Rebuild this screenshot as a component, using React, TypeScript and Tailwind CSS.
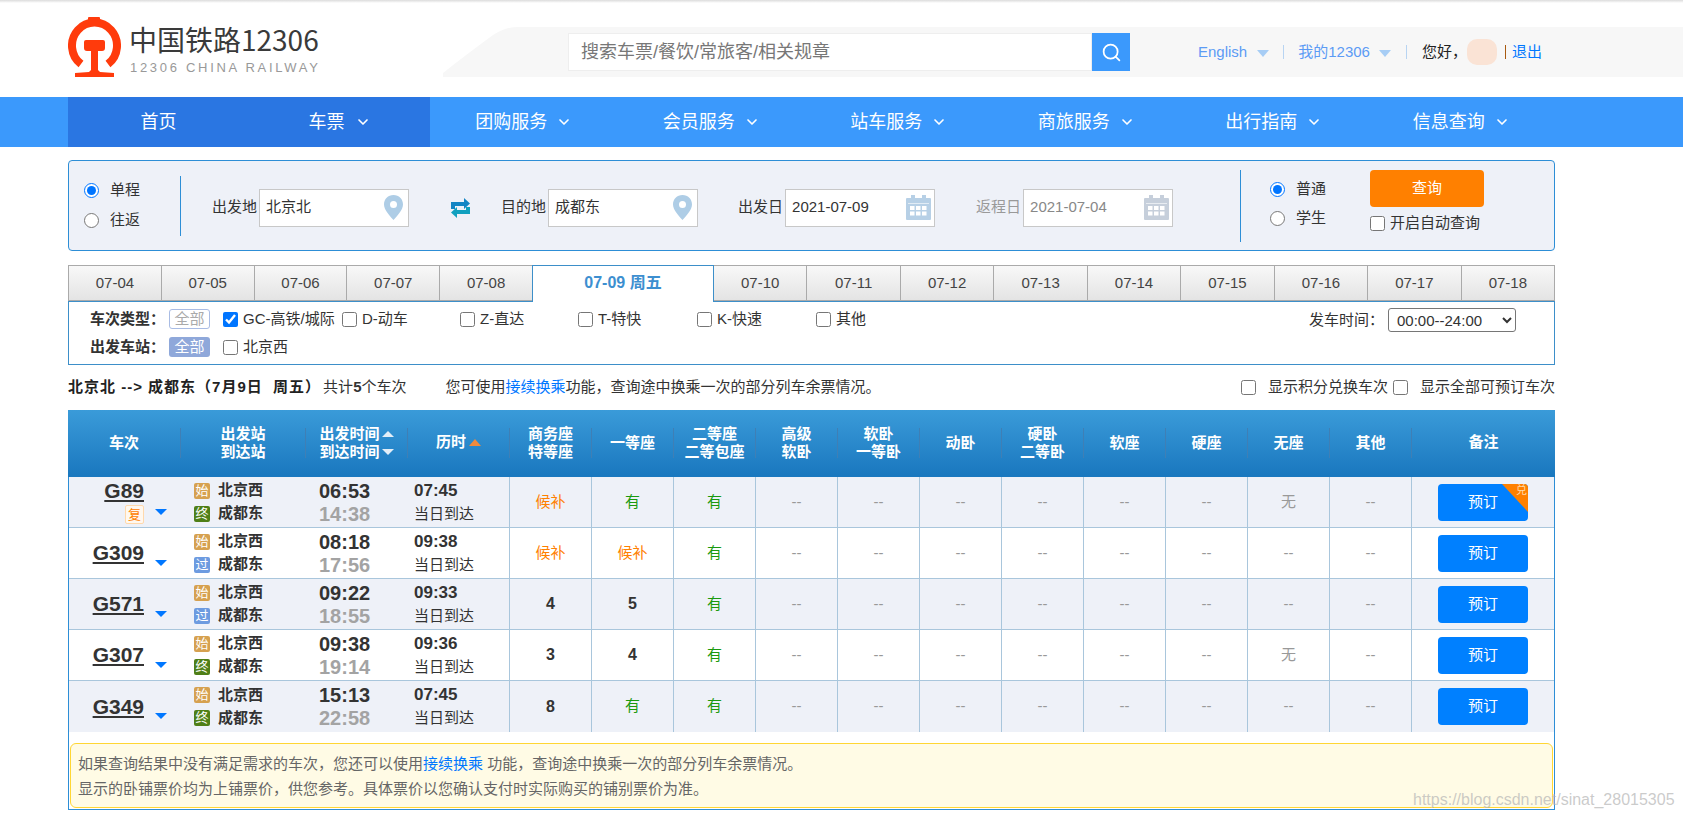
import { ChevronDown, Search } from "lucide-react";

const navItems = ["团购服务", "会员服务", "站车服务", "商旅服务", "出行指南", "信息查询"];
const datesLeft = ["07-04", "07-05", "07-06", "07-07", "07-08"];
const datesRight = ["07-10", "07-11", "07-12", "07-13", "07-14", "07-15", "07-16", "07-17", "07-18"];
const headCols = ["高级|软卧", "软卧|一等卧", "动卧", "硬卧|二等卧", "软座", "硬座", "无座", "其他"];

const trains = [
  { no: "G89", fix: true, end: "终", dep: "06:53", arr: "14:38", dur: "07:45", seats: ["候补", "有", "有", "--", "--", "--", "--", "--", "--", "无", "--"], swap: true },
  { no: "G309", end: "过", dep: "08:18", arr: "17:56", dur: "09:38", seats: ["候补", "候补", "有", "--", "--", "--", "--", "--", "--", "--", "--"] },
  { no: "G571", end: "过", dep: "09:22", arr: "18:55", dur: "09:33", seats: ["4", "5", "有", "--", "--", "--", "--", "--", "--", "--", "--"] },
  { no: "G307", end: "终", dep: "09:38", arr: "19:14", dur: "09:36", seats: ["3", "4", "有", "--", "--", "--", "--", "--", "--", "无", "--"] },
  { no: "G349", end: "终", dep: "15:13", arr: "22:58", dur: "07:45", seats: ["8", "有", "有", "--", "--", "--", "--", "--", "--", "--", "--"] },
];

function Logo() {
  return (
    <svg width="53" height="60" viewBox="0 0 53 60" className="shrink-0">
      <path d="M13 47A22.5 23 0 1 1 40 47" fill="none" stroke="#ff3b0c" strokeWidth="8" />
      <rect x="20" y="0" width="12" height="6" rx="1" fill="#ff3b0c" />
      <path d="M18 23h17q2 0 2 2v6q0 3-3 3h-4v19l2 2 14 1v4H7v-4l14-1 2-2V34h-4q-3 0-3-3v-6q0-2 2-2z" fill="#ff3b0c" />
    </svg>
  );
}

function Pin() {
  return (
    <svg width="19" height="25" viewBox="0 0 19 25" className="shrink-0">
      <path fillRule="evenodd" d="M9.5 0C4 0 0 4 0 9.5 0 15 6 21 9.5 25 13 21 19 15 19 9.5 19 4 15 0 9.5 0zm0 6a3.5 3.5 0 1 1 0 7 3.5 3.5 0 0 1 0-7z" fill="#aecde6" />
    </svg>
  );
}

function Calendar({ color }: { color: string }) {
  const cells = [];
  for (let r = 0; r < 2; r++) for (let c = 0; c < 3; c++) cells.push(<rect key={r + "-" + c} x={4 + c * 6} y={11 + r * 5.5} width="4.5" height="4" fill="#fff" />);
  return (
    <svg width="25" height="25" viewBox="0 0 25 25" className="shrink-0 -mr-[2px]">
      <rect x="0" y="3" width="25" height="22" rx="1" fill={color} />
      <rect x="5" y="0" width="4" height="6" fill={color} />
      <rect x="16" y="0" width="4" height="6" fill={color} />
      <rect x="2" y="8" width="21" height="1" fill="#fff" opacity="0.6" />
      {cells}
    </svg>
  );
}

function Swap() {
  return (
    <svg width="21" height="20" viewBox="0 0 21 20" className="shrink-0">
      <path d="M1 11V4h13V0l6 5.5-6 5.5V8H5v3z" fill="#1385c4" />
      <path d="M20 9v7H7v4l-6-5.5L7 9v3h9V9z" fill="#11a0bf" />
    </svg>
  );
}

function Tri({ className }: { className: string }) {
  return <span className={"inline-block w-0 h-0 border-x-[6px] border-x-transparent " + className} />;
}

function Field({ label, value, muted, icon }: { label: string; value: string; muted?: boolean; icon: React.ReactNode }) {
  return (
    <div className={"flex items-center gap-[2px] " + (muted ? "text-[#999]" : "text-[#333]")}>
      <span className="whitespace-nowrap">{label}</span>
      <div className="w-[150px] h-[38px] bg-white border border-[#c8c8c8] flex items-center justify-between pl-[6px] pr-[5px]">
        <span className={muted ? "text-[#888]" : "text-[#333]"}>{value}</span>
        {icon}
      </div>
    </div>
  );
}

function Check({ label, checked, className }: { label: string; checked?: boolean; className: string }) {
  return (
    <label className={"flex items-center gap-[5px] whitespace-nowrap " + className}>
      <input type="checkbox" defaultChecked={checked} className="w-[15px] h-[15px] m-0 accent-[#0075ff]" />
      {label}
    </label>
  );
}

function Radio({ name, label, checked }: { name: string; label: string; checked?: boolean }) {
  return (
    <label className="flex items-center gap-[11px] h-[15px]">
      <input type="radio" name={name} defaultChecked={checked} className="w-[15px] h-[15px] m-0 accent-[#0075ff]" />
      {label}
    </label>
  );
}

function HeadCell({ text, className }: { text: string; className: string }) {
  const lines = text.split("|");
  return (
    <div className={"h-[30px] flex flex-col items-center justify-center leading-[18px] border-r border-[#3f7fb5] " + className}>
      {lines.map((l) => (
        <span key={l} className="whitespace-nowrap">{l}</span>
      ))}
    </div>
  );
}

function Seat({ v }: { v: string }) {
  const color = v === "候补" ? "text-[#ff8000]" : v === "有" ? "text-[#1a9a0e]" : v === "--" || v === "无" ? "text-[#999]" : "text-[#333] font-bold text-[16px]";
  return (
    <div className={"w-[82px] shrink-0 border-r border-[#a9c6dc] flex items-center justify-center " + color}>{v}</div>
  );
}

function Row({ t, odd }: { t: (typeof trains)[number]; odd: boolean }) {
  const endColor = t.end === "终" ? "bg-[#4f7f17]" : "bg-[#6d9be0]";
  return (
    <div className={"flex h-[51px] border-b border-[#a9c6dc] last:border-b-0 " + (odd ? "bg-[#eef1f8]" : "bg-white")}>
      <div className="w-[112px] shrink-0 pr-[37px] flex flex-col items-end justify-center relative">
        <span className="font-bold underline text-[21px] leading-[22px] text-[#333] font-['Liberation_Sans']">{t.no}</span>
        {t.fix && (
          <span className="w-[19px] h-[19px] mt-[3px] border border-[#ffd9ac] rounded-[2px] bg-[#fff8ef] text-[#ff8000] text-[13px] leading-[17px] text-center">复</span>
        )}
        <Tri className="border-t-[6px] border-t-[#0077ff] absolute left-[86px] top-[32px]" />
      </div>
      <div className="w-[125px] shrink-0 pl-[13px] flex flex-col justify-center gap-[5px] font-bold text-[#333]">
        <div className="flex items-center gap-[8px] h-[18px]">
          <span className="w-[16px] h-[16px] rounded-[2px] bg-[#d6a150] text-white text-[13px] leading-[16px] text-center font-normal">始</span>
          北京西
        </div>
        <div className="flex items-center gap-[8px] h-[18px]">
          <span className={"w-[16px] h-[16px] rounded-[2px] text-white text-[13px] leading-[16px] text-center font-normal " + endColor}>{t.end}</span>
          成都东
        </div>
      </div>
      <div className="w-[102px] shrink-0 pl-[13px] flex flex-col justify-center gap-[5px] font-bold text-[20px] font-['Liberation_Sans'] leading-[18px]">
        <span className="text-[#333]">{t.dep}</span>
        <span className="text-[#a3a3a3]">{t.arr}</span>
      </div>
      <div className="w-[102px] shrink-0 pl-[6px] flex flex-col justify-center gap-[5px] border-r border-[#a9c6dc] leading-[18px] text-[#333]">
        <span className="font-bold text-[17px] font-['Liberation_Sans']">{t.dur}</span>
        <span>当日到达</span>
      </div>
      {t.seats.map((s, i) => (
        <Seat key={i} v={s} />
      ))}
      <div className="flex-1 flex items-center justify-center">
        <button className="relative overflow-hidden w-[90px] h-[37px] rounded-[4px] bg-[#0080ff] text-white">
          预订
          {t.swap && (
            <span className="absolute top-0 right-0 w-0 h-0 border-t-[28px] border-l-[26px] border-t-[#ff8000] border-l-transparent">
              <span className="absolute top-[-29px] right-[1px] text-[11px] leading-[14px] text-[#ffd9a8]">兑</span>
            </span>
          )}
        </button>
      </div>
    </div>
  );
}

export default function App() {
  return (
    <div className="relative min-h-[819px] overflow-hidden bg-white text-[15px] text-[#333] font-['Liberation_Sans','Noto_Sans_CJK_SC',sans-serif]">
      <div className="h-[3px] bg-gradient-to-b from-[#dcdcdc] to-white" />
      {/* top header */}
      <header className="h-[94px] flex items-start">
        <div className="ml-[68px] mt-[14px] flex gap-[8px] w-[249px] shrink-0">
          <Logo />
          <div className="pt-[7px] font-['Noto_Sans_CJK_SC',sans-serif]">
            <div className="text-[28px] leading-[30px] text-[#3a3a3a] whitespace-nowrap">中国铁路12306</div>
            <div className="mt-[6px] ml-[1px] text-[13px] leading-[15px] tracking-[2.7px] text-[#999] whitespace-nowrap font-['Liberation_Sans']">12306 CHINA RAILWAY</div>
          </div>
        </div>
        <div className="flex-1 ml-[126px] mt-[24px] h-[50px] flex">
          <svg width="92" height="50" viewBox="0 0 92 50" className="shrink-0">
            <path d="M0 50V46Q20 30 50 8 62 0 75 0H92V50z" fill="#f7f7f7" />
          </svg>
          <div className="flex-1 bg-[#f7f7f7] flex items-center">
            <div className="ml-[33px] w-[524px] h-[38px] bg-white border border-[#eeeeee] flex items-center pl-[12px] text-[18px] text-[#777]">
              搜索车票/餐饮/常旅客/相关规章
            </div>
            <button className="w-[38px] h-[38px] bg-[#3b99fc] flex items-center justify-center text-white">
              <Search size={21} strokeWidth={2} />
            </button>
            <div className="ml-[68px] flex items-center text-[#5c9bf5] whitespace-nowrap">
              English
              <Tri className="ml-[10px] mt-[3px] border-t-[7px] border-t-[#a7cdf5]" />
              <span className="ml-[14px] w-[1px] h-[14px] bg-[#b8d4f2]" />
              <span className="ml-[14px]">我的12306</span>
              <Tri className="ml-[9px] mt-[3px] border-t-[7px] border-t-[#a7cdf5]" />
              <span className="ml-[15px] w-[1px] h-[14px] bg-[#b8d4f2]" />
              <span className="ml-[15px] text-[#222]">您好，</span>
              <span className="w-[30px] h-[26px] rounded-[10px] bg-[#fae3d5]" />
              <span className="ml-[8px] w-[1px] h-[14px] bg-[#a85a10]" />
              <span className="ml-[6px] text-[#0077ff]">退出</span>
            </div>
          </div>
        </div>
      </header>

      {/* main nav */}
      <nav className="h-[50px] bg-[#3b99fc] pl-[68px] flex text-white text-[18px]">
        <div className="w-[362px] flex bg-[#2a76e2]">
          <div className="w-[181px] flex items-center justify-center">首页</div>
          <div className="w-[181px] flex items-center justify-center gap-[10px]">
            车票
            <ChevronDown size={16} strokeWidth={2.5} />
          </div>
        </div>
        {navItems.map((n) => (
          <div key={n} className="w-[187.5px] flex items-center justify-center gap-[9px] whitespace-nowrap">
            {n}
            <ChevronDown size={16} strokeWidth={2.5} />
          </div>
        ))}
      </nav>

      <main className="w-[1487px] ml-[68px]">
        {/* search form */}
        <section className="mt-[13px] h-[91px] border border-[#2d8ed6] rounded-[4px] bg-[#eef1f8] flex items-center">
          <div className="w-[111px] h-[45px] flex flex-col justify-between pl-[15px]">
            <Radio name="trip" label="单程" checked />
            <Radio name="trip" label="往返" />
          </div>
          <span className="w-[1px] h-[60px] bg-[#2d8ed6]" />
          <div className="ml-[31px] mt-[4px]">
            <Field label="出发地" value="北京北" icon={<Pin />} />
          </div>
          <div className="ml-[41px] mt-[4px]">
            <Swap />
          </div>
          <div className="ml-[30px] mt-[4px]">
            <Field label="目的地" value="成都东" icon={<Pin />} />
          </div>
          <div className="ml-[40px] mt-[4px]">
            <Field label="出发日" value="2021-07-09" icon={<Calendar color="#b7d0e6" />} />
          </div>
          <div className="ml-[41px] mt-[4px]">
            <Field label="返程日" value="2021-07-04" muted icon={<Calendar color="#c6cfdb" />} />
          </div>
          <span className="ml-[67px] w-[1px] h-[72px] bg-[#2d8ed6]" />
          <div className="ml-[29px] w-[100px] h-[44px] mb-[4px] flex flex-col justify-between">
            <Radio name="kind" label="普通" checked />
            <Radio name="kind" label="学生" />
          </div>
          <div className="w-[114px] mb-[10px] flex flex-col gap-[9px]">
            <button className="w-[114px] h-[37px] rounded-[4px] bg-[#ff8000] text-white">查询</button>
            <Check label="开启自动查询" className="h-[15px]" />
          </div>
        </section>

        {/* date tabs */}
        <div className="mt-[14px] h-[36px] flex relative z-10">
          {datesLeft.map((d) => (
            <div key={d} className="w-[92.8px] border border-r-0 border-[#aaaaaa] bg-gradient-to-b from-[#f8f8f8] to-[#e4e4e4] flex items-center justify-center text-[#444]">{d}</div>
          ))}
          <div className="w-[182px] h-[37px] border border-b-0 border-[#3d8fc9] bg-white flex items-center justify-center pb-[3px] text-[16px] font-bold text-[#3d8fd0]">07-09 周五</div>
          {datesRight.map((d) => (
            <div key={d} className="flex-1 border border-l-0 border-[#aaaaaa] bg-gradient-to-b from-[#f8f8f8] to-[#e4e4e4] flex items-center justify-center text-[#444]">{d}</div>
          ))}
        </div>

        {/* filters */}
        <section className="h-[64px] border border-[#3d8fc9] flex justify-between">
          <div className="pl-[21px] pt-[7px]">
            <div className="flex items-center h-[20px]">
              <span className="w-[79px] font-bold whitespace-nowrap">车次类型：</span>
              <span className="w-[41px] h-[20px] rounded-[3px] border border-[#a9bce4] bg-white text-[#aaa] text-center leading-[18px]">全部</span>
              <Check label="GC-高铁/城际" checked className="ml-[13px] w-[119px]" />
              <Check label="D-动车" className="w-[118px]" />
              <Check label="Z-直达" className="w-[118px]" />
              <Check label="T-特快" className="w-[119px]" />
              <Check label="K-快速" className="w-[119px]" />
              <Check label="其他" className="" />
            </div>
            <div className="flex items-center h-[20px] mt-[8px]">
              <span className="w-[79px] font-bold whitespace-nowrap">出发车站：</span>
              <span className="w-[41px] h-[20px] rounded-[3px] bg-[#8fa8da] text-white text-center leading-[20px]">全部</span>
              <Check label="北京西" className="ml-[13px]" />
            </div>
          </div>
          <div className="flex items-center h-[24px] mt-[6px] mr-[38px]">
            <span className="mr-[4px] whitespace-nowrap">发车时间：</span>
            <select className="w-[128px] h-[24px] border border-[#767676] rounded-[3px] bg-white pl-[4px] text-[#333]" defaultValue="all">
              <option value="all">00:00--24:00</option>
            </select>
          </div>
        </section>

        {/* summary */}
        <div className="h-[45px] flex items-center whitespace-nowrap">
          <b className="text-[#222] tracking-[1px]">北京北 --&gt; 成都东（7月9日&nbsp; 周五）</b>
          <span className="ml-[2px]">共计<b>5</b>个车次</span>
          <span className="ml-[39px]">
            您可使用<span className="text-[#0077ff]">接续换乘</span>功能，查询途中换乘一次的部分列车余票情况。
          </span>
          <div className="ml-auto flex items-center gap-[5px]">
            <Check label="显示积分兑换车次" className="gap-[12px]" />
            <Check label="显示全部可预订车次" className="gap-[12px]" />
          </div>
        </div>

        {/* table */}
        <section className="border-x border-b border-[#2d8ed6] h-[400px]">
          <div className="-mx-px h-[67px] bg-gradient-to-b from-[#3a9bd9] to-[#1a78bf] border-b-2 border-[#1a78bf] flex items-center font-bold text-white">
            <HeadCell text="车次" className="w-[113px] shrink-0" />
            <HeadCell text="出发站|到达站" className="w-[125px] shrink-0" />
            <div className="w-[102px] h-[30px] shrink-0 border-r border-[#3f7fb5] flex flex-col items-center justify-center leading-[18px]">
              <span className="flex items-center gap-[2px] whitespace-nowrap">出发时间<Tri className="border-b-[6px] border-b-[#e3eef8]" /></span>
              <span className="flex items-center gap-[2px] whitespace-nowrap">到达时间<Tri className="border-t-[6px] border-t-[#e3eef8]" /></span>
            </div>
            <div className="w-[102px] h-[30px] shrink-0 border-r border-[#3f7fb5] flex items-center justify-center gap-[3px]">
              历时<Tri className="border-b-[7px] border-b-[#f08a3c]" />
            </div>
            <HeadCell text="商务座|特等座" className="w-[82px] shrink-0" />
            <HeadCell text="一等座" className="w-[82px] shrink-0" />
            <HeadCell text="二等座|二等包座" className="w-[82px] shrink-0" />
            {headCols.map((c) => (
              <HeadCell key={c} text={c} className="w-[82px] shrink-0" />
            ))}
            <div className="flex-1 text-center">备注</div>
          </div>
          <div>
            {trains.map((t, i) => (
              <Row key={t.no} t={t} odd={i % 2 === 0} />
            ))}
          </div>
          {/* notice */}
          <div className="mt-[11px] mx-[1px] h-[65px] border border-[#ffd633] rounded-[6px] bg-[#fffbe5] px-[7px] pt-[7px] leading-[25px] text-[#666]">
            <p>如果查询结果中没有满足需求的车次，您还可以使用<span className="text-[#0077ff]">接续换乘</span> 功能，查询途中换乘一次的部分列车余票情况。</p>
            <p>显示的卧铺票价均为上铺票价，供您参考。具体票价以您确认支付时实际购买的铺别票价为准。</p>
          </div>
        </section>
      </main>

      <span className="absolute left-[1413px] top-[789px] text-[16px] leading-[22px] text-[#b4b4b4]/70 whitespace-nowrap">https://blog.csdn.net/sinat_28015305</span>
    </div>
  );
}
